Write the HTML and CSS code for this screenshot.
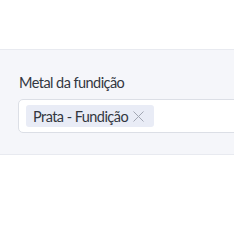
FILE: index.html
```html
<!DOCTYPE html>
<html>
<head>
<meta charset="utf-8">
<link rel="stylesheet" href="styles.css">
</head>
<body>
<div class="page">
  <section class="panel">
    <label class="label">Metal da fundição</label>
    <div class="select">
      <span class="tag">Prata - Fundição
        <svg class="x" viewBox="0 0 11 11" width="11" height="11"><path d="M0.5 0.5L10.5 10.5M10.5 0.5L0.5 10.5" stroke="#a2a7b3" stroke-width="1" fill="none"/></svg>
      </span>
    </div>
  </section>
</div>
</body>
</html>
```
FILE: styles.css
```css
html, body { margin: 0; padding: 0; background: #fff; }
body { font-family: "Lato", "Noto Sans", sans-serif; color: #33373f; }
.page { width: 234px; height: 225px; overflow: hidden; padding-top: 49px; box-sizing: border-box; }
.panel {
  background: #f5f6fa;
  border-top: 1px solid #e8eaf0;
  border-bottom: 1px solid #e8eaf0;
  height: 106px;
  box-sizing: border-box;
  padding: 24px 0 0 18px;
}
.label { display: block; font-size: 14.5px; line-height: 18px; margin-left: 1px; letter-spacing: -0.55px; }
.select {
  margin-top: 7px;
  width: 260px;
  height: 34px;
  box-sizing: border-box;
  background: #fff;
  border: 1px solid #dcdfe6;
  border-radius: 5px;
  padding: 5px 7px;
  display: flex;
  align-items: center;
}
.tag {
  display: inline-flex;
  align-items: center;
  gap: 5px;
  height: 22px;
  padding: 0 10px 0 7px;
  background: #e9ecf6;
  border-radius: 3px;
  font-size: 14.5px;
  letter-spacing: -0.55px;
  color: #33373f;
}
.x { display: block; }
```
